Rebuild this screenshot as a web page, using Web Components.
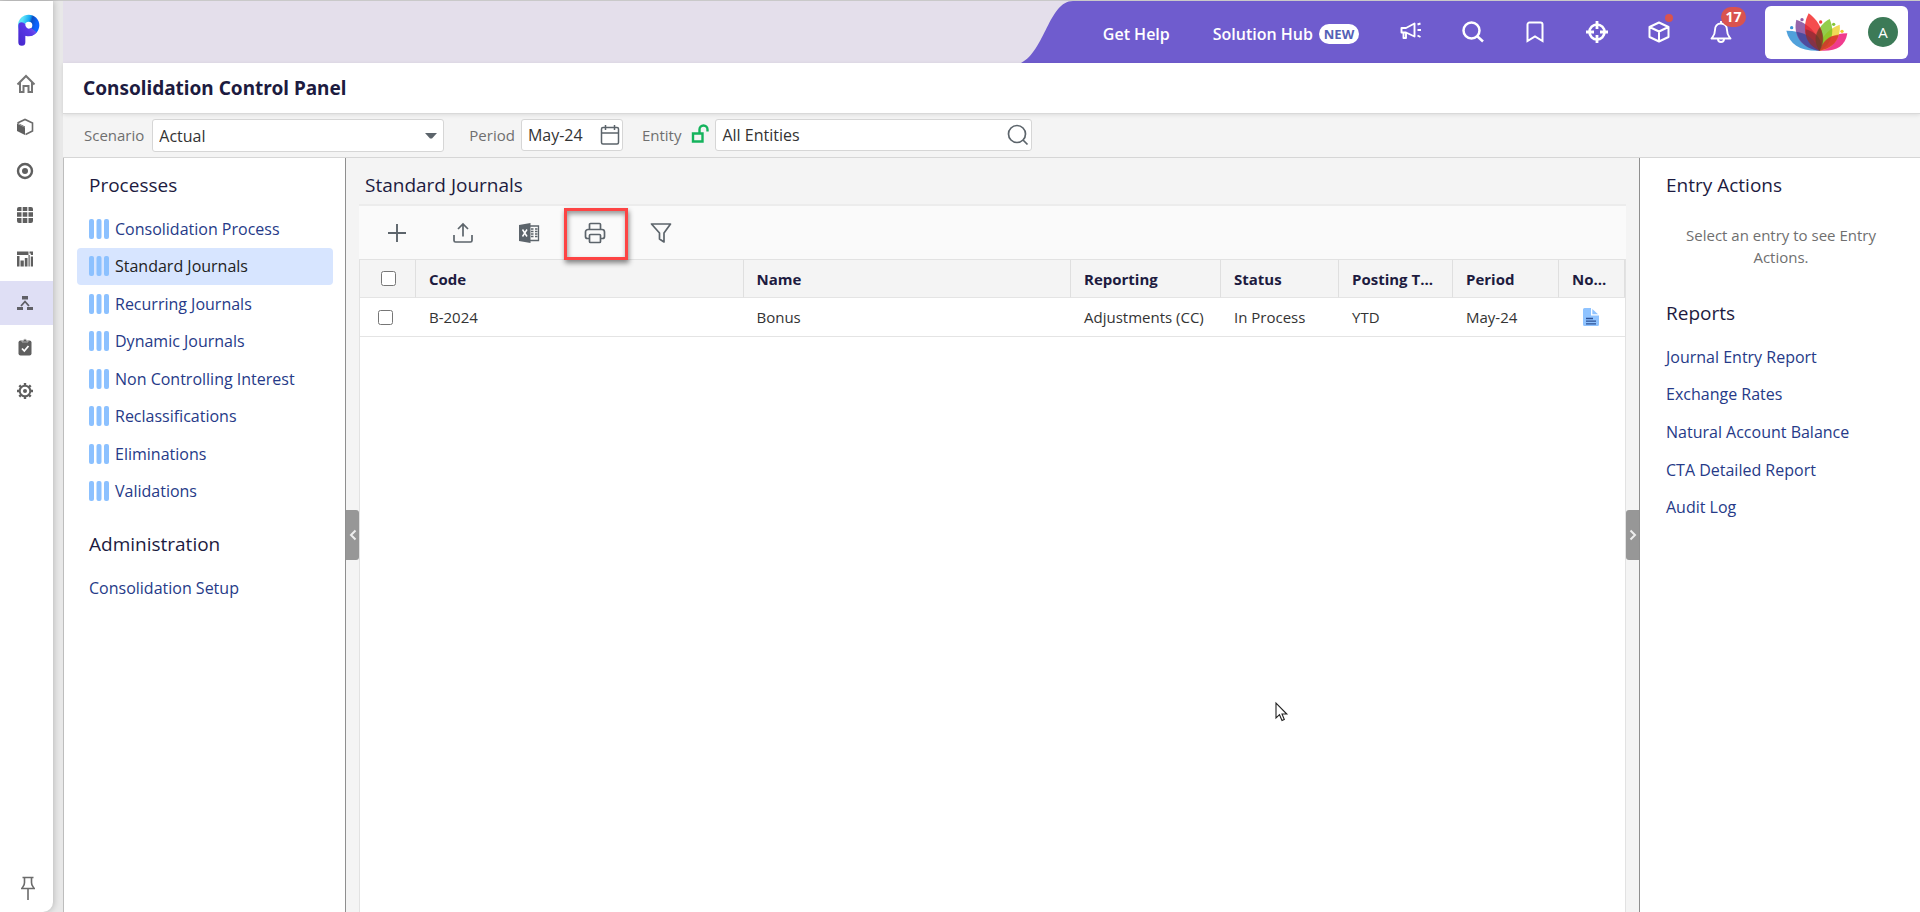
<!DOCTYPE html>
<html lang="en">
<head>
<meta charset="utf-8">
<title>Consolidation Control Panel</title>
<style>
  html, body { margin: 0; height: 100%; }
  body {
    font-family: "Open Sans", "Noto Sans", sans-serif;
    font-size: 15px; line-height: 22px; color: #333;
    --ink: #1d1b3f; --link: #263a88; --soft: #f4f4f4; --purple: #6f5cce;
  }
</style>
</head>
<body>
<app-shell>
  <side-rail slot="rail"></side-rail>
  <top-bar slot="top"></top-bar>
  <page-title slot="top">Consolidation Control Panel</page-title>
  <filter-bar slot="top"></filter-bar>

  <side-panel slot="left" class="left">
    <panel-section heading="Processes">
      <nav-link icon="bars">Consolidation Process</nav-link>
      <nav-link icon="bars" active>Standard Journals</nav-link>
      <nav-link icon="bars">Recurring Journals</nav-link>
      <nav-link icon="bars">Dynamic Journals</nav-link>
      <nav-link icon="bars">Non Controlling Interest</nav-link>
      <nav-link icon="bars">Reclassifications</nav-link>
      <nav-link icon="bars">Eliminations</nav-link>
      <nav-link icon="bars">Validations</nav-link>
    </panel-section>
    <panel-section heading="Administration">
      <nav-link>Consolidation Setup</nav-link>
    </panel-section>
  </side-panel>
  <split-handle slot="left" direction="left"></split-handle>

  <journal-view slot="main"></journal-view>

  <split-handle slot="right" direction="right"></split-handle>
  <side-panel slot="right" class="right">
    <panel-section heading="Entry Actions">
      <empty-note>Select an entry to see Entry Actions.</empty-note>
    </panel-section>
    <panel-section heading="Reports">
      <nav-link>Journal Entry Report</nav-link>
      <nav-link>Exchange Rates</nav-link>
      <nav-link>Natural Account Balance</nav-link>
      <nav-link>CTA Detailed Report</nav-link>
      <nav-link>Audit Log</nav-link>
    </panel-section>
  </side-panel>
</app-shell>

<script>
const ICONS = {
  logo: [24, 34, `<svg viewBox="53 37 72 102"><defs>
    <linearGradient id="a" x1="0" y1=".3" x2="1" y2=".6"><stop offset="0" stop-color="#5fe3f7"/><stop offset=".45" stop-color="#12a5f4"/><stop offset=".62" stop-color="#0b4fc4"/><stop offset="1" stop-color="#0a63ff"/></linearGradient>
    <linearGradient id="b" x1="0" y1="1" x2="1" y2="0"><stop offset="0" stop-color="#4326c9"/><stop offset=".6" stop-color="#5a38e8"/><stop offset="1" stop-color="#8a6cf5"/></linearGradient></defs>
    <circle cx="88" cy="74" r="21.500" fill="none" stroke="url(#a)" stroke-width="21"/>
    <path d="M57 75C57 62 72 62 78 71A11 11 0 0 0 95 82L112 95A32 32 0 0 1 78 105V125A10 10 0 0 1 57 125Z" fill="url(#b)"/></svg>`],
  home: [22, 22, `<svg viewBox="-2 -2 22 22" fill="none" stroke="#757575" stroke-width="2"><path d="M1.500 10.500 10 2l8.500 8.500M4 8.500V18h3.500v-6h5v6H16V8.500"/></svg>`],
  box: [18, 18, `<svg viewBox="0 0 18 18"><path d="M1 5.500 9 9.500V17L1 13Z" fill="#5f5f5f"/><path d="M1.500 5 9 1.500 16.500 5v8L9.500 16.500" fill="none" stroke="#6b6b6b" stroke-width="1.600"/><path d="M1 5 9 9.500v-1L2 5Z" fill="#5f5f5f"/></svg>`],
  target: [18, 18, `<svg viewBox="0 0 18 18" fill="#5f5f5f"><circle cx="9" cy="9" r="7" fill="none" stroke="#5f5f5f" stroke-width="2.400"/><circle cx="9" cy="9" r="3"/></svg>`],
  grid: [18, 18, `<svg viewBox="0 0 18 18" fill="#5f5f5f"><path d="M1 3a2 2 0 0 1 2-2h2.500v4H1ZM6.700 1h4.600v4H6.700ZM12.500 1H15a2 2 0 0 1 2 2v2h-4.500ZM1 6.300h4.500v4.400H1ZM6.700 6.300h4.600v4.400H6.700ZM12.500 6.300H17v4.400h-4.500ZM1 12h4.500v5H3a2 2 0 0 1-2-2ZM6.700 12h4.600v5H6.700ZM12.500 12H17v3a2 2 0 0 1-2 2h-2.500Z"/></svg>`],
  report: [18, 18, `<svg viewBox="0 0 18 18" fill="#5f5f5f"><path d="M1 1.500h11.500v3.500H1ZM13.500 1.500H17V5h-2.200V3.500h-1.300ZM1 6h2.500v10.500H1ZM4.500 10.500h3.300v6H4.500ZM8.800 8h2.700v8.500H8.800ZM12.500 5h1.200v11.500h-1.200ZM14.800 6.500H17v10h-2.200Z"/></svg>`],
  tree: [18, 18, `<svg viewBox="0 0 18 18" fill="#606066"><path d="M6 2h6v3.500H6ZM1 13h6v3H1ZM11 13h6v3h-6Z"/><path d="m5 12 4-4.500 4 4.500" fill="none" stroke="#606066" stroke-width="1.800"/></svg>`],
  tasks: [18, 18, `<svg viewBox="0 0 18 18"><rect x="2.500" y="2.500" width="13" height="15" rx="2" fill="#5f5f5f"/><path d="M6 4h6V2.500h-1.500a1.500 1.500 0 0 0-3 0H6Z" fill="#5f5f5f" stroke="#d5d5d5" stroke-width=".7"/><path d="m6 10.500 2.300 2.500L12.500 8" fill="none" stroke="#fff" stroke-width="1.800"/></svg>`],
  gear: [18, 18, `<svg viewBox="0 0 18 18" fill="none" stroke="#5f5f5f"><circle cx="9" cy="9" r="5.300" stroke-width="2"/><circle cx="9" cy="9" r="2" fill="#5f5f5f" stroke="none"/><path d="M9 1v3M9 14v3M1 9h3M14 9h3M3.300 3.300l2 2M12.700 12.700l2 2M3.300 14.700l2-2M12.700 5.300l2-2" stroke-width="2.400"/></svg>`],
  pin: [16, 24, `<svg viewBox="0 0 16 24" fill="none" stroke="#6b6b6b" stroke-width="1.600"><path d="M2.500 1.500h11M4.500 2v4.500c0 3-1.500 3.500-2.500 6M11.500 2v4.500c0 3 1.500 3.500 2.500 6M1 12.500h14M8 12.500V24"/></svg>`],
  horn: [22, 18, `<svg viewBox="0 0 22 18" fill="none" stroke="#fff" stroke-width="1.900"><path d="M1.500 5h4.500L14.500 .500v13L6 9.500H1.500ZM3.500 9.500V15H6v-5.500" stroke-linejoin="round"/><path d="m17.500 1.500 3-1M17.500 7h3.500M17.500 12.500l3 1.500"/></svg>`],
  find: [22, 22, `<svg viewBox="0 0 22 22" fill="none" stroke="#fff" stroke-width="2.500"><circle cx="9.500" cy="9.500" r="8"/><path d="m15 15 6 5.500"/></svg>`],
  bookmark: [18, 22, `<svg viewBox="0 0 18 22" fill="none" stroke="#fff" stroke-width="2"><path d="M1.500 20V3.500a2 2 0 0 1 2-2h11a2 2 0 0 1 2 2V20L9 15.500Z"/></svg>`],
  cross: [22, 22, `<svg viewBox="0 0 22 22" fill="none" stroke="#fff" stroke-width="2.600"><circle cx="11" cy="11" r="7.500"/><path d="M11 0v8M11 14v8M0 11h8M14 11h8" stroke-width="2.800"/></svg>`],
  cube: [22, 22, `<svg viewBox="0 0 22 22" fill="none" stroke="#fff" stroke-width="2" stroke-linejoin="round"><path d="M11 1.500 20.500 6v10L11 20.500 1.500 16V6ZM1.500 6l9.500 4.500L20.500 6M11 10.500v10"/></svg>`],
  bell: [22, 22, `<svg viewBox="0 0 22 22" fill="none" stroke="#fff" stroke-width="1.900" stroke-linejoin="round"><path d="M11 2.500c-4 0-6 3-6 6.500 0 5-1.500 6-3.500 8.500h19C18.500 15 17 14 17 9c0-3.500-2-6.500-6-6.500Z"/><path d="M8 18a3 3 0 0 0 6 0M11 0v2.500"/></svg>`],
  lotus: [64, 42, `<svg viewBox="46 31 192 126"><g fill-opacity=".8">
    <path fill="#2489d2" d="M50 90C60 132 92 152 150 150C132 108 100 90 50 90Z"/>
    <path fill="#ec0a70" d="M233 98C188 98 160 120 150 150C198 153 226 140 233 98Z"/>
    <path fill="#ecd02c" d="M210 72C172 85 145 120 150 150C190 145 215 110 210 72Z"/>
    <path fill="#7b3f95" d="M80 57C70 102 92 142 150 150C152 102 120 72 80 57Z"/>
    <path fill="#79c01f" d="M180 55C142 75 128 120 150 150C190 130 195 90 180 55Z"/>
    <path fill="#f22020" d="M117 38C95 80 105 130 150 150C170 110 155 65 117 38Z"/></g>
    <path fill="#3c4a9c" fill-opacity=".7" d="M81 94C90 128 115 146 150 150C138 118 112 97 81 94Z"/>
    <path fill="#d8262c" fill-opacity=".8" d="M207 103C176 104 158 124 150 150C178 144 200 130 207 103Z"/>
    <path fill="#8a2f35" fill-opacity=".75" d="M108 86C104 112 122 140 150 150C160 126 150 98 108 86Z"/>
    <path fill="#5a4128" fill-opacity=".6" d="M150 80C132 105 135 132 150 150C164 128 165 102 150 80Z"/>
    <circle cx="66" cy="81" r="5" fill="#3b95d6"/><circle cx="97" cy="57" r="5" fill="#8d5aa5"/><circle cx="153" cy="64" r="5" fill="#f2403f"/><circle cx="192" cy="71" r="5" fill="#86c53b"/><circle cx="217" cy="92" r="5" fill="#ecc92c"/></svg>`],
  caret: [14, 8, `<svg viewBox="0 0 14 8"><path d="M1 1h12L8 6.500H6Z" fill="#5c646b"/></svg>`],
  calendar: [20, 22, `<svg viewBox="0 0 20 22" fill="none" stroke="#5c646b" stroke-width="1.500"><rect x="1.500" y="3.500" width="17" height="16.500" rx="1.500"/><path d="M1.500 9h17M5.500 1v5M14.500 1v5"/></svg>`],
  lens: [22, 22, `<svg viewBox="0 0 22 22" fill="none" stroke="#5c646b" stroke-width="1.700"><circle cx="10" cy="10" r="8.500"/><path d="m16 16 4.500 4.500"/></svg>`],
  unlock: [18, 20, `<svg viewBox="0 0 18 20" fill="none" stroke="#14b35c" stroke-width="2.400"><path d="M2 9.500h9.500V17.500H2Z"/><path d="M8.500 9V5.500a4 4 0 0 1 8 0V7.500"/></svg>`],
  plus: [20, 20, `<svg viewBox="0 0 20 20" stroke="#5c646b" stroke-width="1.900"><path d="M10 1v18M1 10h18"/></svg>`],
  upload: [22, 22, `<svg viewBox="0 0 22 22" fill="none" stroke="#5c646b" stroke-width="1.700"><path d="M2 13v5.500a1.500 1.500 0 0 0 1.500 1.500h15a1.500 1.500 0 0 0 1.500-1.500V13M11 14.500V2.500M6 7l5-5 5 5"/></svg>`],
  excel: [22, 22, `<svg viewBox="0 0 22 22"><path d="M1 3 12.500 1v20L1 19Z" fill="#5c646b"/><path d="M12 4h8.500v14.500H12" fill="none" stroke="#5c646b" stroke-width="1.300"/><path d="M13 7h2.500M17 7h2.500M13 9.500h2.500M17 9.500h2.500M13 12h2.500M17 12h2.500M13 14.500h2.500M17 14.500h2.500" stroke="#5c646b" stroke-width="1.600"/><path d="m4.500 7.500 4.500 7M9 7.500l-4.500 7" stroke="#fff" stroke-width="1.500"/></svg>`],
  print: [22, 22, `<svg viewBox="0 0 22 22" fill="none" stroke="#5c646b" stroke-width="1.700"><path d="M5.500 7.500V2.500a1 1 0 0 1 1-1h9a1 1 0 0 1 1 1v5M5.500 16.500H3.500a2 2 0 0 1-2-2V10a2.500 2.500 0 0 1 2.500-2.500h14a2.500 2.500 0 0 1 2.500 2.500v4.500a2 2 0 0 1-2 2h-2"/><rect x="5.500" y="12.500" width="11" height="8" rx="1"/></svg>`],
  funnel: [22, 22, `<svg viewBox="0 0 22 22" fill="none" stroke="#5c646b" stroke-width="1.700" stroke-linejoin="round"><path d="M1.500 2h19l-6.500 9v9l-4.500-3v-6Z"/></svg>`],
  note: [16, 18, `<svg viewBox="0 0 16 18"><path d="M0 1.500A1.500 1.500 0 0 1 1.500 0H8v7.500h8v9A1.500 1.500 0 0 1 14.500 18h-13A1.500 1.500 0 0 1 0 16.500Z" fill="#8fc3ff"/><path d="M9.300 1 15 6.300H9.300Z" fill="#8fc3ff"/><path d="M3 10.500h7M3 13.200h10M3 15.800h10" stroke="#2d5296" stroke-width="1.300"/></svg>`],
  bars: [20, 20, `<svg viewBox="0 0 20 20" fill="#8cc1ff"><rect width="5" height="20" rx="2"/><rect x="7.500" width="5" height="20" rx="2"/><rect x="15" width="5" height="20" rx="2"/></svg>`],
  left: [8, 12, `<svg viewBox="0 0 8 12" fill="none" stroke="#eee" stroke-width="2"><path d="M6.500 1.500 2 6l4.500 4.500"/></svg>`],
  right: [8, 12, `<svg viewBox="0 0 8 12" fill="none" stroke="#eee" stroke-width="2"><path d="M1.500 1.500 6 6l-4.500 4.500"/></svg>`],
  pointer: [13, 20, `<svg viewBox="0 0 13 20"><path d="M1 1v15l3.500-3.300L7 18.500l2.300-1L7 12h4.800Z" fill="#fff" stroke="#222" stroke-width="1.100"/></svg>`]
};

const RESET = `:host,*{box-sizing:border-box} a{color:inherit;text-decoration:none} button,input,select{font:inherit;color:inherit;margin:0}
  button{display:flex;align-items:center;justify-content:center;padding:0;border:0;background:none;cursor:pointer}`;

function define(name, css, html) {
  customElements.define(name, class extends HTMLElement {
    constructor() {
      super();
      this.attachShadow({ mode: "open" });
    }
    connectedCallback() {
      const body = typeof html === "function" ? html(this) : html;
      this.shadowRoot.innerHTML = `<style>${RESET}${css}</style>${body}`;
    }
  });
}

define("ui-icon", `:host{display:block;flex:none} svg{display:block;width:100%;height:100%;overflow:visible}`, el => {
  const [w, h, svg] = ICONS[el.getAttribute("name")];
  return `<style>:host{width:${w}px;height:${h}px}</style>${svg}`;
});

define("app-shell", `
  :host{display:flex;position:relative;min-height:100vh;background:#e8e8e8;border-top:1px solid #c9c9c9}
  .page{flex:1;min-width:0;display:flex;flex-direction:column;margin-left:10px}
  .work{flex:1;display:flex;border-left:1px solid #bdbdbd;background:var(--soft)}
  .main{flex:1;min-width:0;display:flex}
  .side{display:flex}
  .pointer{position:absolute;left:66.4%;top:76.9%}`,
  `<slot name="rail"></slot>
   <div class="page"><slot name="top"></slot>
     <div class="work"><div class="side"><slot name="left"></slot></div><div class="main"><slot name="main"></slot></div><div class="side"><slot name="right"></slot></div></div>
   </div><ui-icon class="pointer" name="pointer"></ui-icon>`);

define("side-rail", `
  :host{display:flex;flex-direction:column;width:53px;background:#fff;border-radius:0 0 10px 0;box-shadow:1px 0 6px #0003}
  .brand{padding:12px 0 14px 17px}
  nav{display:flex;flex-direction:column;flex:1}
  nav a{height:44px;display:flex;align-items:center;justify-content:center;padding-right:4px}
  nav a.on{background:#dfdff5}
  button{height:24px;margin:0 0 12px 3px}`,
  `<a class="brand" href="#" aria-label="Start"><ui-icon name="logo"></ui-icon></a>
   <nav>${["home","box","target","grid","report","tree","tasks","gear"].map(n => `<a href="#" aria-label="${n}" class="${n === "tree" ? "on" : ""}"><ui-icon name="${n}"></ui-icon></a>`).join("")}</nav>
   <button aria-label="Pin menu"><ui-icon name="pin"></ui-icon></button>`);

define("top-bar", `
  :host{display:flex;height:62px;background:#e4dfeb;justify-content:flex-end}
  .wave{display:block;width:52px;height:62px;flex:none}
  .nav{display:flex;align-items:center;background:var(--purple);padding:0 12px 0 30px;color:#fff;font-size:16px;font-weight:600}
  .nav>a{display:flex;align-items:center;gap:6px;height:22px;margin-top:3px}
  .hub{margin:0 21px 0 43px}
  .new{background:#fff;color:#5360b5;border-radius:10px;width:40px;height:20px;line-height:20px;font-size:13px;font-weight:700;text-align:center}
  button{position:relative;width:62px;height:40px}
  .dot{position:absolute;left:37px;top:2px;width:8px;height:8px;border-radius:4px;background:#d9534f}
  .count{position:absolute;left:31px;top:-5px;width:25px;height:20px;border-radius:10px;background:#d9534f;font-size:14px;line-height:20px;font-weight:700}
  .card{display:flex;align-items:center;justify-content:space-between;width:143px;height:53px;margin-left:13px;padding:0 10px 0 20px;background:#fff;border-radius:6px}
  .me{width:30px;height:30px;border-radius:15px;background:#3c7a57;color:#fff;font-size:15px;font-weight:400}`,
  `<svg class="wave" viewBox="0 0 52 62" preserveAspectRatio="none"><path d="M0 62C24 50 28 0 52 0V62Z" fill="#6f5cce"/></svg>
   <div class="nav"><a href="#">Get Help</a><a class="hub" href="#">Solution Hub <span class="new">NEW</span></a>
   <button aria-label="Announcements"><ui-icon name="horn"></ui-icon></button>
   <button aria-label="Search"><ui-icon name="find"></ui-icon></button>
   <button aria-label="Bookmarks"><ui-icon name="bookmark"></ui-icon></button>
   <button aria-label="Locate"><ui-icon name="cross"></ui-icon></button>
   <button aria-label="Packages"><ui-icon name="cube"></ui-icon><span class="dot"></span></button>
   <button aria-label="Notifications"><ui-icon name="bell"></ui-icon><span class="count">17</span></button>
   <div class="card"><ui-icon name="lotus"></ui-icon><button class="me">A</button></div></div>`);

define("page-title", `
  :host{display:block;background:#fff;padding:12px 20px;border-bottom:1px solid #d9d9d9;box-shadow:0 1px 4px #0000001a;position:relative}
  h1{margin:0;font-family:"Noto Sans",sans-serif;font-size:19px;line-height:26px;font-weight:700;color:var(--ink)}`, `<h1><slot></slot></h1>`);

define("filter-bar", `
  :host{display:flex;align-items:flex-start;background:var(--soft);padding:5px 21px;border-bottom:1px solid #d6d6d6;color:#333}
  label{color:#6f6f6f;line-height:33px}
  .field{position:relative;display:flex;align-items:center;height:32px;font-size:16px}
  select,input{appearance:none;width:100%;height:100%;border:1px solid #d6d6d6;border-radius:3px;background:#fff;padding:0 6px;outline:0}
  .field ui-icon{position:absolute;right:6px;pointer-events:none}
  .scenario{width:292px;height:33px;margin:0 25px 0 8px}
  .period{width:102px;margin:0 19px 0 6px}
  .period ui-icon,.entity ui-icon{right:3px}
  .lock{margin:5px 6px 0 10px}
  .entity{width:317px}`,
  `<label for="s">Scenario</label><div class="field scenario"><select id="s"><option>Actual</option></select><ui-icon name="caret"></ui-icon></div>
   <label for="p">Period</label><div class="field period"><input id="p" value="May-24"><ui-icon name="calendar"></ui-icon></div>
   <label for="e">Entity</label><ui-icon class="lock" name="unlock"></ui-icon><div class="field entity"><input id="e" value="All Entities"><ui-icon name="lens"></ui-icon></div>`);

define("side-panel", `
  :host{display:flex;flex-direction:column;background:#fff;padding-top:14px}
  :host(.left){width:282px;border-right:1px solid #8f8f8f;padding-left:13px;padding-right:12px;--inset:12px;--section-gap:21px}
  :host(.right){width:281px;border-left:1px solid #8f8f8f;padding-left:14px;padding-right:12px;--inset:12px;--section-gap:32px}`, `<slot></slot>`);

define("panel-section", `
  :host{display:block;margin-bottom:var(--section-gap)}
  h2{margin:0 0 12px var(--inset);font-size:19px;line-height:26px;font-weight:500;color:var(--ink)}
  nav{display:grid;grid-auto-rows:1fr}`,
  el => `<h2>${el.getAttribute("heading")}</h2><nav style="${el.querySelector("nav-link") ? `height:${Math.round(el.children.length * 75 / 2)}px` : ""}"><slot></slot></nav>`);

define("nav-link", `
  :host{display:grid}
  a{display:flex;align-items:center;gap:6px;padding-left:var(--inset);border-radius:4px;font-size:16px;font-weight:500;color:var(--link);white-space:nowrap}
  :host([active]) a{background:#d7e5ff;color:#222}`,
  el => `<a href="#">${el.hasAttribute("icon") ? `<ui-icon name="${el.getAttribute("icon")}"></ui-icon>` : ""}<span><slot></slot></span></a>`);

define("empty-note", `:host{display:block;padding:14px 12px 0;text-align:center;color:#6f6f6f}`, `<slot></slot>`);

define("split-handle", `
  :host{display:flex;align-items:center;width:13px;background:var(--soft)}
  button{width:13px;height:50px;background:#979797}
  :host([direction=left]) button{border-radius:0 3px 3px 0}
  :host([direction=right]) button{border-radius:3px 0 0 3px}`,
  el => `<button aria-label="Collapse ${el.getAttribute("direction")} panel"><ui-icon name="${el.getAttribute("direction")}"></ui-icon></button>`);

define("journal-view", `
  :host{display:flex;flex-direction:column;flex:1;min-width:0}
  h2{margin:0;padding:14px 0 6px 6px;font-size:19px;line-height:26px;font-weight:500;color:var(--ink)}
  .tools{display:flex;background:#fafafa;border-top:2px solid #ececec;padding-left:5px}
  .tools button{position:relative;width:66px;height:53px}
  .mark{position:absolute;inset:2px 0 -1px 2px;border:3px solid #fd4444;box-shadow:1px 3px 5px #0007,inset 1px 3px 5px #0006;z-index:1}
  .sheet{flex:1;background:#fff;border:1px solid #e2e2e2;border-bottom:0}
  table{width:100%;table-layout:fixed;border-collapse:separate;border-spacing:0}
  th,td{text-align:left;padding:0 10px 0 13px;white-space:nowrap;overflow:hidden;border-bottom:1px solid #e4e4e4}
  th{height:38px;background:var(--soft);border-right:1px solid #dfdfdf;color:var(--ink);font-weight:700}
  td{height:39px;color:#333}
  tr>:first-child{padding:0 0 0 21px} tbody tr>:first-child{padding-left:18px}
  input{display:block;width:15px;height:15px}
  td:nth-child(4){padding-right:0}
  th:nth-child(6),th:nth-child(8){padding-right:0}
  td ui-icon{margin-left:11px}`,
  `<h2>Standard Journals</h2>
   <div class="tools">
     <button aria-label="Add"><ui-icon name="plus"></ui-icon></button>
     <button aria-label="Upload"><ui-icon name="upload"></ui-icon></button>
     <button aria-label="Export to Excel"><ui-icon name="excel"></ui-icon></button>
     <button aria-label="Print"><ui-icon name="print"></ui-icon><span class="mark"></span></button>
     <button aria-label="Filter"><ui-icon name="funnel"></ui-icon></button>
   </div>
   <div class="sheet"><table>
     <colgroup><col style="width:56px"><col><col><col style="width:150px"><col style="width:118px"><col style="width:114px"><col style="width:106px"><col style="width:66px"></colgroup>
     <thead><tr><th><input type="checkbox" aria-label="Select all"></th><th>Code</th><th>Name</th><th>Reporting</th><th>Status</th><th>Posting T...</th><th>Period</th><th>No...</th></tr></thead>
     <tbody><tr><td><input type="checkbox" aria-label="Select B-2024"></td><td>B-2024</td><td>Bonus</td><td>Adjustments (CC)</td><td>In Process</td><td>YTD</td><td>May-24</td><td><ui-icon name="note"></ui-icon></td></tr></tbody>
   </table></div>`);
</script>
</body>
</html>
